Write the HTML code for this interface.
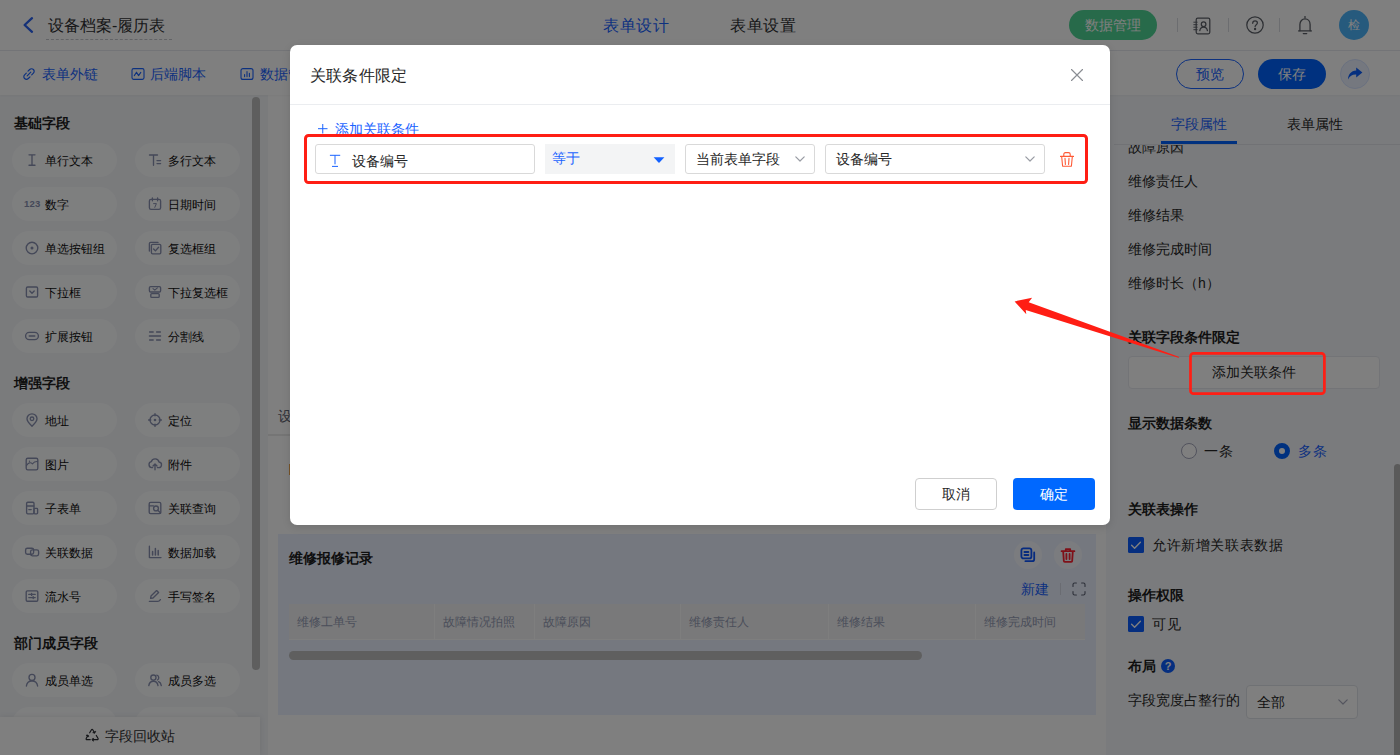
<!DOCTYPE html>
<html lang="zh"><head><meta charset="utf-8"><title>表单设计</title>
<style>
*{box-sizing:border-box;margin:0;padding:0}
html,body{width:1400px;height:755px;overflow:hidden}
body{font-family:"Liberation Sans",sans-serif;position:relative;background:#fff;color:#262626;font-size:14px;line-height:1}
.a{position:absolute;white-space:nowrap}
svg{position:absolute;overflow:visible}
.t{position:absolute;white-space:nowrap;line-height:20px;height:20px}
#app{position:absolute;left:0;top:0;width:1400px;height:755px;background:#fff;overflow:hidden;z-index:0;isolation:isolate}
#mask{z-index:1;position:absolute;left:0;top:0;width:1400px;height:755px;background:rgba(0,0,0,.5)}
.blue{color:#1a63ff}
.pill{position:absolute;width:105px;height:34px;border-radius:17px;background:#fdfeff;font-size:12px;color:#0d0d0d}
.pill span{position:absolute;left:33px;top:8px;line-height:20px;white-space:nowrap}
.pill svg{left:13px;top:10px}
.h{position:absolute;font-weight:bold;font-size:14px;line-height:20px;color:#1f1f1f;white-space:nowrap}
.rp{position:absolute;left:1128px;font-size:14px;line-height:20px;color:#262626;white-space:nowrap}
</style></head><body>
<div id="app">
<!-- HEADER -->
<div class="a" id="hdr" style="left:0;top:0;width:1400px;height:51px;background:#fff;border-bottom:1px solid #e6e8ee">
<svg width="12" height="16" style="left:22px;top:17px" viewBox="0 0 12 16"><path d="M10 1.2 L2.6 8 L10 14.8" fill="none" stroke="#2a63f0" stroke-width="2.3" stroke-linecap="round" stroke-linejoin="round"/></svg>
<div class="t" style="left:48px;top:16px;font-size:16px;color:#303133">设备档案-履历表</div>
<div class="a" style="left:46px;top:39px;width:126px;height:0;border-top:1px dashed #c4c6cc"></div>
<div class="t" style="left:603px;top:16px;font-size:16px;letter-spacing:.55px;color:#1a63ff">表单设计</div>
<div class="t" style="left:730px;top:16px;font-size:16px;letter-spacing:.55px;color:#303133">表单设置</div>
<div class="a" style="left:1069px;top:10px;width:88px;height:30px;border-radius:15px;background:#4ed495;color:#fff;font-size:14px;line-height:30px;text-align:center">数据管理</div>
<div class="a" style="left:1177px;top:18px;width:1px;height:14px;background:#d8dae0"></div>
<div class="a" style="left:1228px;top:18px;width:1px;height:14px;background:#d8dae0"></div>
<div class="a" style="left:1279px;top:18px;width:1px;height:14px;background:#d8dae0"></div>
<svg width="20" height="20" style="left:1192px;top:15.700px" viewBox="0 0 20 20" fill="none" stroke="#5c6068" stroke-width="1.250" stroke-linecap="round" stroke-linejoin="round"><rect x="4.200" y="2.200" width="13.600" height="15.600" rx="1.500"/><path d="M1.800 6.200h3.400M1.800 8.700h3.400M1.800 11.200h3.400M1.800 13.700h3.400" stroke-width="1"/><circle cx="11.600" cy="8.200" r="2.300"/><path d="M7.800 14.600c.4-2.200 1.900-3.400 3.800-3.400s3.400 1.200 3.800 3.400"/></svg>
<svg width="20" height="20" style="left:1245px;top:15.400px" viewBox="0 0 20 20" fill="none" stroke="#5c6068" stroke-width="1.250" stroke-linecap="round"><circle cx="10" cy="10" r="8.200"/><path d="M7.700 8.300c0-1.500 1.100-2.400 2.400-2.400s2.300.9 2.300 2.200c0 1.600-2.300 1.800-2.300 3.500"/><circle cx="10.100" cy="14" r=".550" fill="#5c6068"/></svg>
<svg width="18" height="22" style="left:1296px;top:15px" viewBox="0 0 18 22" fill="none" stroke="#5c6068" stroke-width="1.300" stroke-linecap="round" stroke-linejoin="round"><path d="M9 1.600v1.200"/><path d="M3.900 15.800V9.600c0-3.300 2.200-5.700 5.100-5.700s5.100 2.400 5.100 5.700v6.200"/><path d="M2.600 15.900h12.800"/><path d="M7.300 18.600h3.400"/></svg>
<div class="a" style="left:1339px;top:10px;width:30px;height:30px;border-radius:15px;background:#4cb4fa;color:#fff;font-size:12px;line-height:30px;text-align:center">检</div>
</div>
<!-- TOOLBAR -->
<div class="a" id="tb" style="left:0;top:51px;width:1400px;height:44px;background:#fff;box-shadow:0 1px 2px rgba(0,0,0,.04);z-index:2">
<svg width="14" height="14" style="left:21.600px;top:16.200px" viewBox="0 0 14 14" fill="none" stroke="#1a63ff" stroke-width="1.2" stroke-linecap="round"><path d="M6 4.2l1.7-1.7a2.6 2.6 0 0 1 3.7 3.7L9.7 7.9"/><path d="M8 9.8l-1.7 1.7a2.6 2.6 0 0 1-3.7-3.7L4.3 6.1"/><path d="M5.2 8.8l3.6-3.6"/></svg>
<div class="t" style="left:42px;top:13px;font-size:14px;color:#1a63ff">表单外链</div>
<svg width="14" height="14" style="left:131px;top:16.200px" viewBox="0 0 14 14" fill="none" stroke="#1a63ff" stroke-width="1.1" stroke-linejoin="round" stroke-linecap="round"><rect x="1" y="1.6" width="12" height="10.8" rx="1.6"/><path d="M3.3 8.6L5.5 5.2 7.6 8.6 9.8 5.4"/></svg>
<div class="t" style="left:150px;top:13px;font-size:14px;color:#1a63ff">后端脚本</div>
<svg width="14" height="14" style="left:240px;top:16.200px" viewBox="0 0 14 14" fill="none" stroke="#1a63ff" stroke-width="1.1" stroke-linecap="round"><rect x="1" y="1.6" width="12" height="10.8" rx="2"/><path d="M4.6 9.6V7.6M7 9.6V4.6M9.4 9.6V6.4"/></svg>
<div class="t" style="left:260px;top:13px;font-size:14px;color:#1a63ff">数据管理</div>
<div class="a" style="left:1176px;top:8px;width:68px;height:30px;border-radius:15px;border:1px solid #1a63ff;color:#1a63ff;font-size:14px;line-height:28px;text-align:center;background:#fff">预览</div>
<div class="a" style="left:1258px;top:8px;width:68px;height:30px;border-radius:15px;background:#0062ff;color:#fff;font-size:14px;line-height:30px;text-align:center">保存</div>
<div class="a" style="left:1340px;top:8px;width:30px;height:30px;border-radius:15px;background:#eaf1ff;border:1px solid #d5e2ff"></div>
<svg width="16" height="14" style="left:1347px;top:16px" viewBox="0 0 16 14"><path d="M9.2 0.6L15.4 5.6 9.2 10.4V7.6C5.4 7.4 2.8 9 1 12.6 1.2 7.6 4 4 9.2 3.6Z" fill="#0b5fff"/></svg>
</div>
<!-- SIDEBAR -->
<div class="a" id="side" style="left:0;top:95px;width:268px;height:660px;background:#f4f6f9;overflow:hidden">
<div class="h" style="left:14px;top:18px">基础字段</div>
<div class="pill" style="left:12px;top:48px"><svg width="14" height="14" viewBox="0 0 14 14" fill="none" stroke="#8890b0" stroke-width="1.35" stroke-linecap="round" stroke-linejoin="round" ><path d="M4 1.8h6M4 12.2h6M7 1.8v10.4"/></svg><span>单行文本</span></div>
<div class="pill" style="left:135px;top:48px"><svg width="14" height="14" viewBox="0 0 14 14" fill="none" stroke="#8890b0" stroke-width="1.35" stroke-linecap="round" stroke-linejoin="round" ><path d="M1.5 2h8M5.5 2v10.2"/><path d="M9 7.6h3.6M9 10.6h3.6"/></svg><span>多行文本</span></div>
<div class="pill" style="left:12px;top:92px"><div style="position:absolute;left:12px;top:7px;font-size:9.500px;font-weight:bold;line-height:20px;color:#8890b0;letter-spacing:.2px">123</div><span>数字</span></div>
<div class="pill" style="left:135px;top:92px"><svg width="14" height="14" viewBox="0 0 14 14" fill="none" stroke="#8890b0" stroke-width="1.35" stroke-linecap="round" stroke-linejoin="round" ><rect x="1.4" y="2.4" width="11.2" height="10" rx="1.6"/><path d="M4.4 1v2.8M9.6 1v2.8"/><path d="M5.6 6.6h2.8L6.8 10.4" stroke-width="1"/></svg><span>日期时间</span></div>
<div class="pill" style="left:12px;top:136px"><svg width="14" height="14" viewBox="0 0 14 14" fill="none" stroke="#8890b0" stroke-width="1.35" stroke-linecap="round" stroke-linejoin="round" ><circle cx="7" cy="7" r="5.8"/><circle cx="7" cy="7" r="1.5" fill="#8890b0" stroke="none"/></svg><span>单选按钮组</span></div>
<div class="pill" style="left:135px;top:136px"><svg width="14" height="14" viewBox="0 0 14 14" fill="none" stroke="#8890b0" stroke-width="1.35" stroke-linecap="round" stroke-linejoin="round" ><path d="M1.4 10V2.6c0-.7.5-1.2 1.2-1.2H10"/><rect x="3.4" y="3.4" width="9.4" height="9.4" rx="1.2"/><path d="M5.6 8l1.8 1.9 3.2-3.6"/></svg><span>复选框组</span></div>
<div class="pill" style="left:12px;top:180px"><svg width="14" height="14" viewBox="0 0 14 14" fill="none" stroke="#8890b0" stroke-width="1.35" stroke-linecap="round" stroke-linejoin="round" ><rect x="1.4" y="2" width="11.2" height="10" rx="1.2"/><path d="M4.8 6l2.2 2.2L9.2 6"/></svg><span>下拉框</span></div>
<div class="pill" style="left:135px;top:180px"><svg width="14" height="14" viewBox="0 0 14 14" fill="none" stroke="#8890b0" stroke-width="1.35" stroke-linecap="round" stroke-linejoin="round" ><rect x="1.4" y="1.6" width="11.2" height="5.4" rx="1.2"/><path d="M5 3.6l1.8 1.6 2.6-2.4" stroke-width="1.1"/><rect x="2.8" y="8.6" width="8.4" height="3.8" rx="1"/></svg><span>下拉复选框</span></div>
<div class="pill" style="left:12px;top:224px"><svg width="14" height="14" viewBox="0 0 14 14" fill="none" stroke="#8890b0" stroke-width="1.35" stroke-linecap="round" stroke-linejoin="round" ><rect x=".600" y="3.400" width="12.800" height="7.200" rx="3.600"/><path d="M4.200 7h5.600"/></svg><span>扩展按钮</span></div>
<div class="pill" style="left:135px;top:224px"><svg width="14" height="14" viewBox="0 0 14 14" fill="none" stroke="#8890b0" stroke-width="1.35" stroke-linecap="round" stroke-linejoin="round" ><path d="M1.600 3h3.600M8.600 3h3.800M1.400 7h11.200M1.600 11h3.600M8.600 11h3.800"/></svg><span>分割线</span></div>
<div class="h" style="left:14px;top:278px">增强字段</div>
<div class="pill" style="left:12px;top:308px"><svg width="14" height="14" viewBox="0 0 14 14" fill="none" stroke="#8890b0" stroke-width="1.35" stroke-linecap="round" stroke-linejoin="round" ><path d="M7 13.2C4 10.4 2 8.2 2 5.8a5 5 0 0 1 10 0c0 2.4-2 4.6-5 7.4z"/><circle cx="7" cy="5.8" r="1.8"/></svg><span>地址</span></div>
<div class="pill" style="left:135px;top:308px"><svg width="14" height="14" viewBox="0 0 14 14" fill="none" stroke="#8890b0" stroke-width="1.35" stroke-linecap="round" stroke-linejoin="round" ><circle cx="7" cy="7" r="5"/><circle cx="7" cy="7" r="1.300" fill="#8890b0" stroke="none"/><path d="M7 .6v2.2M7 11.2v2.2M.6 7h2.2M11.2 7h2.2"/></svg><span>定位</span></div>
<div class="pill" style="left:12px;top:352px"><svg width="14" height="14" viewBox="0 0 14 14" fill="none" stroke="#8890b0" stroke-width="1.35" stroke-linecap="round" stroke-linejoin="round" ><rect x="1.2" y="1.2" width="11.6" height="11.6" rx="1.6"/><path d="M1.4 8.6c2-3 4.2-3.6 6-1.8 1.400-1.6 3.200-2.400 5.200-2.200" stroke-width="1.1"/><circle cx="4.500" cy="4.300" r=".7" fill="#8890b0" stroke="none"/></svg><span>图片</span></div>
<div class="pill" style="left:135px;top:352px"><svg width="14" height="14" viewBox="0 0 14 14" fill="none" stroke="#8890b0" stroke-width="1.35" stroke-linecap="round" stroke-linejoin="round" ><path d="M4.6 10.6H3.800a3 3 0 0 1-.5-5.900 4 4 0 0 1 7.700.3 2.800 2.800 0 0 1-.6 5.600H9.400"/><path d="M7 12.800V7.200M5 9l2-2 2 2"/></svg><span>附件</span></div>
<div class="pill" style="left:12px;top:396px"><svg width="14" height="14" viewBox="0 0 14 14" fill="none" stroke="#8890b0" stroke-width="1.35" stroke-linecap="round" stroke-linejoin="round" ><rect x="1.600" y="1.200" width="7.400" height="11.600" rx="1.200"/><path d="M1.800 5h7M3.800 8.600h2.400"/><rect x="9" y="7.400" width="3.600" height="5.400" rx=".8"/></svg><span>子表单</span></div>
<div class="pill" style="left:135px;top:396px"><svg width="14" height="14" viewBox="0 0 14 14" fill="none" stroke="#8890b0" stroke-width="1.35" stroke-linecap="round" stroke-linejoin="round" ><rect x="1.200" y="1.400" width="11.600" height="11.200" rx="1.400"/><path d="M1.400 4.800h4"/><circle cx="8" cy="7.400" r="2.400"/><path d="M9.800 9.200l2.800 2.800"/></svg><span>关联查询</span></div>
<div class="pill" style="left:12px;top:440px"><svg width="14" height="14" viewBox="0 0 14 14" fill="none" stroke="#8890b0" stroke-width="1.35" stroke-linecap="round" stroke-linejoin="round" ><rect x=".600" y="3.200" width="8" height="6" rx="1.700"/><rect x="5.600" y="4.800" width="8" height="6" rx="1.700"/></svg><span>关联数据</span></div>
<div class="pill" style="left:135px;top:440px"><svg width="14" height="14" viewBox="0 0 14 14" fill="none" stroke="#8890b0" stroke-width="1.35" stroke-linecap="round" stroke-linejoin="round" ><path d="M1.400 1.200v11.400h11.600"/><path d="M4.600 10V6.400M7.400 10V3.400M10.200 10V5.600" stroke-width="1.500"/></svg><span>数据加载</span></div>
<div class="pill" style="left:12px;top:484px"><svg width="14" height="14" viewBox="0 0 14 14" fill="none" stroke="#8890b0" stroke-width="1.35" stroke-linecap="round" stroke-linejoin="round" ><rect x="1.200" y="1.800" width="11.600" height="10.400" rx="1.200"/><path d="M3.800 5.400h6.400M3.800 8.600h6.400M6.600 4.400v2M8.200 7.600v2"/></svg><span>流水号</span></div>
<div class="pill" style="left:135px;top:484px"><svg width="14" height="14" viewBox="0 0 14 14" fill="none" stroke="#8890b0" stroke-width="1.35" stroke-linecap="round" stroke-linejoin="round" ><path d="M2.600 9.400l.4-2.400 5.600-5.400 2 2-5.600 5.400z"/><path d="M1.400 12.400h8.400c1.200 0 1.800-.6 2.600-1.800"/></svg><span>手写签名</span></div>
<div class="h" style="left:14px;top:538px">部门成员字段</div>
<div class="pill" style="left:12px;top:568px"><svg width="14" height="14" viewBox="0 0 14 14" fill="none" stroke="#8890b0" stroke-width="1.35" stroke-linecap="round" stroke-linejoin="round" ><circle cx="7" cy="4.400" r="3"/><path d="M1.400 13c.4-3.200 2.600-5 5.600-5s5.200 1.800 5.600 5"/></svg><span>成员单选</span></div>
<div class="pill" style="left:135px;top:568px"><svg width="14" height="14" viewBox="0 0 14 14" fill="none" stroke="#8890b0" stroke-width="1.35" stroke-linecap="round" stroke-linejoin="round" ><circle cx="5.400" cy="4.600" r="2.600"/><path d="M.8 12.600c.4-2.800 2-4.400 4.600-4.400s4.200 1.600 4.600 4.400"/><path d="M8.800 2.200a2.600 2.600 0 0 1 .6 4.800M10.600 8.600c1.600.6 2.400 2 2.700 4"/></svg><span>成员多选</span></div>
<div class="pill" style="left:12px;top:612px"><span>部门单选</span></div>
<div class="pill" style="left:135px;top:612px"><span>部门多选</span></div>
<div class="a" style="left:252px;top:2px;width:8px;height:573px;border-radius:4px;background:#bdbdbd"></div>
<div class="a" style="left:0;top:622px;width:260px;height:38px;background:#fff;box-shadow:0 0 6px rgba(0,0,0,.09)"></div>
<svg width="15" height="13" viewBox="0 0 15 13" style="left:84.500px;top:632.700px" fill="none" stroke="#2b2d33" stroke-width="1.200" stroke-linecap="round" stroke-linejoin="round"><path d="M4.700 4.800L6.300 2Q7.100.700 7.900 2L9.500 4.700"/><path d="M11.300 7.500L13 10.300Q13.500 11.700 12 11.700H8"/><path d="M5.200 11.700H2.200Q.700 11.700 1.300 10.300L2.800 7.600"/><path d="M10.600 3.600L9.700 5.200 8.100 4.700Z M8.100 10.300L7 11.700 8.100 13Z M1.500 7.200L3 7 3.600 8.400Z" fill="#2b2d33" stroke-width=".800"/></svg>
<div class="t" style="left:105px;top:631px;font-size:14px;color:#303133">字段回收站</div>
</div>
<!-- CANVAS -->
<div class="a" id="cv" style="left:260px;top:95px;width:846px;height:660px">
<div class="a" style="left:8px;top:0;width:838px;height:660px;background:#fff"></div>
<div class="t" style="left:18px;top:311px;font-size:14px;color:#5f6370">设备信息</div>
<div class="a" style="left:8px;top:339px;width:838px;height:2px;background:#ebebeb"></div>
<div class="a" style="left:28.500px;top:369px;width:3px;height:11px;background:#f0a850"></div>
<div class="a" style="left:18px;top:439px;width:818px;height:181px;background:#ebf1ff"></div>
<div class="h" style="left:29px;top:453px">维修报修记录</div>
<div class="a" style="left:754px;top:446px;width:28px;height:28px;border-radius:14px;background:#f7f9ff"></div>
<div class="a" style="left:794px;top:446px;width:28px;height:28px;border-radius:14px;background:#f7f9ff"></div>
<svg width="16" height="16" viewBox="0 0 16 16" style="left:760px;top:452px" fill="none" stroke="#0f57ff" stroke-width="1.800" stroke-linecap="round" stroke-linejoin="round"><rect x="1.400" y="1.400" width="10" height="10" rx="2"/><path d="M4.400 5h4M4.400 8h4"/><path d="M14.200 5.400v6.800a2 2 0 0 1-2 2H5.400"/></svg>
<svg width="16" height="16" viewBox="0 0 16 16" style="left:800px;top:452px" fill="none" stroke="#ff2030" stroke-width="1.800" stroke-linecap="round" stroke-linejoin="round"><path d="M1.600 4.200h12.800M5.800 4V2.200h4.400V4M3.200 4.400l.6 9.400c0 .6.500 1 1 1h6.400c.5 0 1-.4 1-1l.6-9.400M6.400 7v5M9.600 7v5"/></svg>
<div class="t" style="left:761px;top:484px;font-size:14px;letter-spacing:.3px;color:#1a63ff">新建</div>
<div class="a" style="left:800px;top:488px;width:1px;height:12px;background:#d5d9e4"></div>
<svg width="14" height="14" viewBox="0 0 14 14" style="left:812px;top:487px" fill="none" stroke="#5a6072" stroke-width="1.100" stroke-linecap="round" stroke-linejoin="round"><path d="M1 4.400V2.600C1 1.700 1.700 1 2.600 1h1.800M9.600 1h1.800c.9 0 1.600.7 1.600 1.600v1.800M13 9.600v1.800c0 .9-.7 1.600-1.600 1.600H9.600M4.400 13H2.600C1.700 13 1 12.300 1 11.400V9.600"/></svg>
<div class="a" style="left:29px;top:509px;width:796px;height:36px;background:#f3f3f4;border-bottom:1px solid #fdfdfd"></div>
<div class="t" style="left:37px;top:517px;font-size:12px;color:#969db4">维修工单号</div>
<div class="t" style="left:183px;top:517px;font-size:12px;color:#969db4">故障情况拍照</div>
<div class="t" style="left:283px;top:517px;font-size:12px;color:#969db4">故障原因</div>
<div class="t" style="left:429px;top:517px;font-size:12px;color:#969db4">维修责任人</div>
<div class="t" style="left:577px;top:517px;font-size:12px;color:#969db4">维修结果</div>
<div class="t" style="left:724px;top:517px;font-size:12px;color:#969db4">维修完成时间</div>
<div class="a" style="left:174px;top:509px;width:1px;height:36px;background:#fcfcfd"></div>
<div class="a" style="left:274px;top:509px;width:1px;height:36px;background:#fcfcfd"></div>
<div class="a" style="left:420px;top:509px;width:1px;height:36px;background:#fcfcfd"></div>
<div class="a" style="left:568px;top:509px;width:1px;height:36px;background:#fcfcfd"></div>
<div class="a" style="left:715px;top:509px;width:1px;height:36px;background:#fcfcfd"></div>
<div class="a" style="left:29px;top:556px;width:633px;height:9px;border-radius:5px;background:#bebebe"></div>
</div>
<!-- RIGHT PANEL -->
<div class="a" id="rp" style="left:1106px;top:95px;width:294px;height:660px;background:#f5f7fa;overflow:hidden">
<div class="rp" style="left:22px;top:42px">故障原因</div>
<div class="rp" style="left:22px;top:76px">维修责任人</div>
<div class="rp" style="left:22px;top:110px">维修结果</div>
<div class="rp" style="left:22px;top:144px">维修完成时间</div>
<div class="rp" style="left:22px;top:178px">维修时长（h）</div>
<div class="a" style="left:0;top:0;width:294px;height:50px;background:#f5f7fa"></div><div class="a" style="left:8px;top:49px;width:286px;height:1px;background:#e2e5ea"></div>
<div class="t" style="left:65px;top:19px;font-size:14px;color:#1a63ff">字段属性</div>
<div class="t" style="left:181px;top:19px;font-size:14px;color:#262626">表单属性</div>
<div class="a" style="left:55px;top:46px;width:76px;height:3px;background:#0062ff"></div>
<div class="h" style="left:22px;top:232px">关联字段条件限定</div>
<div class="a" style="left:22px;top:261px;width:252px;height:33px;border:1px solid #e6e8ee;border-radius:4px;background:#fff;font-size:14px;line-height:31px;text-align:center;color:#262626">添加关联条件</div>
<div class="h" style="left:22px;top:318px">显示数据条数</div>
<div class="a" style="left:75px;top:348px;width:16px;height:16px;border-radius:8px;border:1px solid #a3a5bb;background:#fff"></div>
<div class="t" style="left:98px;top:346px;font-size:14px;letter-spacing:.6px;color:#262626">一条</div>
<div class="a" style="left:168px;top:348px;width:16px;height:16px;border-radius:8px;border:5.500px solid #0062ff;background:#fff"></div>
<div class="t" style="left:192px;top:346px;font-size:14px;letter-spacing:.6px;color:#1a63ff">多条</div>
<div class="h" style="left:22px;top:404px">关联表操作</div>
<svg width="16" height="16" viewBox="0 0 16 16" style="left:22px;top:442px"><rect width="16" height="16" rx="1.500" fill="#0a5cff"/><path d="M3.600 8.200l3 3 5.800-6" fill="none" stroke="#fff" stroke-width="1.400" stroke-linecap="round" stroke-linejoin="round"/></svg>
<div class="t" style="left:46px;top:440px;font-size:14px;letter-spacing:.6px;color:#262626">允许新增关联表数据</div>
<div class="h" style="left:22px;top:490px">操作权限</div>
<svg width="16" height="16" viewBox="0 0 16 16" style="left:22px;top:521px"><rect width="16" height="16" rx="1.500" fill="#0a5cff"/><path d="M3.600 8.200l3 3 5.800-6" fill="none" stroke="#fff" stroke-width="1.400" stroke-linecap="round" stroke-linejoin="round"/></svg>
<div class="t" style="left:46px;top:519px;font-size:14px;letter-spacing:.6px;color:#262626">可见</div>
<div class="h" style="left:22px;top:561px">布局</div>
<div class="a" style="left:55px;top:564px;width:14px;height:14px;border-radius:7px;background:#0a5cff;color:#fff;font-size:11px;font-weight:bold;line-height:14px;text-align:center">?</div>
<div class="t" style="left:22px;top:595px;font-size:14px;color:#262626">字段宽度占整行的</div>
<div class="a" style="left:140px;top:590px;width:112px;height:34px;border:1px solid #dfe2e8;border-radius:4px;background:#fff"></div>
<div class="t" style="left:151px;top:597px;font-size:14px;color:#262626">全部</div>
<svg width="10" height="6" viewBox="0 0 10 6" style="left:232px;top:604px" fill="none" stroke="#a9abbd" stroke-width="1.200" stroke-linecap="round" stroke-linejoin="round"><path d="M.8.800L5 5 9.200.800"/></svg>
<div class="a" style="left:287.500px;top:369px;width:7px;height:300px;border-radius:3.500px 3.500px 0 0;background:#b5b5b5"></div>
</div>
</div>
<div id="mask"></div>
<!-- MODAL -->
<div class="a" id="modal" style="z-index:2;left:290px;top:45px;width:820px;height:480px;background:#fff;border-radius:7px;overflow:hidden;box-shadow:0 2px 8px rgba(0,0,0,.12)">
<div class="t" style="left:20px;top:21px;font-size:16px;letter-spacing:.2px;color:#262626">关联条件限定</div>
<svg width="12" height="12" viewBox="0 0 12 12" style="left:781.300px;top:24.200px" fill="none" stroke="#8a8d93" stroke-width="1.150" stroke-linecap="round"><path d="M.5.500l11 11M11.500.500l-11 11"/></svg>
<div class="a" style="left:0;top:59px;width:820px;height:1px;background:#ebedf0"></div>
<svg width="10" height="10" viewBox="0 0 10 10" style="left:27.5px;top:79px" stroke="#1a63ff" stroke-width="1" fill="none"><path d="M0 4.700h9.500M4.750 0v9.500"/></svg><div class="t" style="left:45px;top:74px;font-size:14px;color:#1a63ff">添加关联条件</div>
<div class="a" style="left:15px;top:90px;width:782px;height:48px;background:#fff"></div>
<div class="a" style="left:25px;top:99px;width:220px;height:30px;border:1px solid #d9d9d9;border-radius:3px;background:#fff"></div>
<svg width="12" height="14" viewBox="0 0 12 14" style="left:39px;top:109px" fill="none" stroke="#1a63ff" stroke-width="1" stroke-linecap="butt"><path d="M.9 1.300h10.300M6 1.300v9M3 12.400h6"/></svg>
<div class="t" style="left:62px;top:106px;font-size:14px;color:#262626">设备编号</div>
<div class="a" style="left:255px;top:99px;width:130px;height:30px;background:#f3f4f5"></div>
<div class="t" style="left:262px;top:103px;font-size:14px;color:#1a63ff">等于</div>
<svg width="12" height="6" viewBox="0 0 12 6" style="left:363px;top:112px"><path d="M.6.300h10.800L6.500 5.500a.700.700 0 0 1-1 0z" fill="#1261ff"/></svg>
<div class="a" style="left:395px;top:99px;width:130px;height:30px;border:1px solid #d9d9d9;border-radius:3px;background:#fff"></div>
<div class="t" style="left:406px;top:104px;font-size:14px;color:#262626">当前表单字段</div>
<svg width="10" height="6" viewBox="0 0 10 6" style="left:505px;top:111px" fill="none" stroke="#9a9da5" stroke-width="1.200" stroke-linecap="round" stroke-linejoin="round"><path d="M.8.800L5 5 9.200.800"/></svg>
<div class="a" style="left:535px;top:99px;width:220px;height:30px;border:1px solid #d9d9d9;border-radius:3px;background:#fff"></div>
<div class="t" style="left:546px;top:104px;font-size:14px;color:#262626">设备编号</div>
<svg width="10" height="6" viewBox="0 0 10 6" style="left:735px;top:111px" fill="none" stroke="#9a9da5" stroke-width="1.200" stroke-linecap="round" stroke-linejoin="round"><path d="M.8.800L5 5 9.200.800"/></svg>
<svg width="14" height="15" viewBox="0 0 14 15" style="left:770px;top:107px" fill="none" stroke="#ff5a36" stroke-width="1.100" stroke-linecap="round" stroke-linejoin="round"><path d="M3.800 4.200V2.300Q3.800.600 5.500.600H8.500Q10.200.600 10.200 2.300V4.200"/><path d="M.500 4.400H13.500"/><path d="M1.700 4.800L2.600 14.300H11.400L12.300 4.800"/><path d="M5 6.400L5.400 12.400M9 6.400L8.600 12.400"/></svg>
<div class="a" style="left:625px;top:433px;width:82px;height:32px;border:1px solid #cfcfcf;border-radius:4px;background:#fff;font-size:14px;line-height:30px;text-align:center;color:#262626">取消</div>
<div class="a" style="left:723px;top:433px;width:82px;height:32px;border-radius:4px;background:#0068ff;font-size:14px;line-height:32px;text-align:center;color:#fff">确定</div>
</div>
<!-- ANNOTATIONS -->
<svg id="anno" width="1400" height="755" style="left:0;top:0;z-index:3" viewBox="0 0 1400 755">
<rect x="305.500" y="135.400" width="781" height="47.200" rx="3" fill="none" stroke="#ff1e14" stroke-width="3"/>
<rect x="1190.500" y="353.400" width="133.900" height="40.300" rx="3" fill="none" stroke="#ff1e14" stroke-width="2.700"/>
<path d="M1014.600 301.400 L1032.100 297.700 L1028.700 302.200 L1178.600 356.700 L1179.200 358 L1025.700 310 L1026.300 314.300 Z" fill="#ff1e14"/>
</svg>
</body></html>
